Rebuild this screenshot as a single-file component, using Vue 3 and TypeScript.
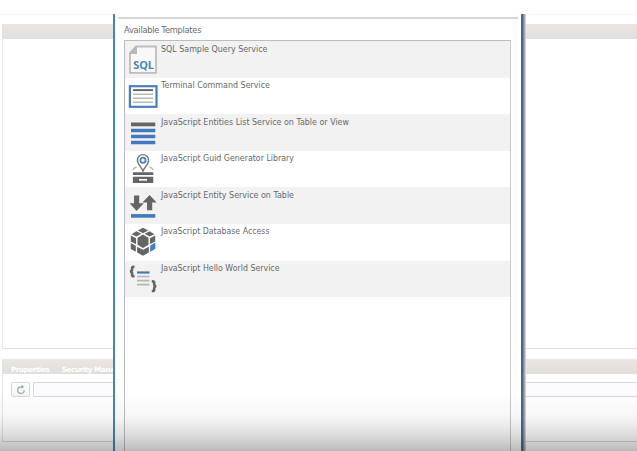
<script setup lang="ts">
interface Template {
  icon: string
  label: string
  width: number
}

const templates: Template[] = [
  { icon: 'sql', label: 'SQL Sample Query Service', width: 106.5 },
  { icon: 'terminal', label: 'Terminal Command Service', width: 109 },
  { icon: 'list', label: 'JavaScript Entities List Service on Table or View', width: 188 },
  { icon: 'guid', label: 'JavaScript Guid Generator Library', width: 133 },
  { icon: 'entity', label: 'JavaScript Entity Service on Table', width: 133 },
  { icon: 'database', label: 'JavaScript Database Access', width: 108.5 },
  { icon: 'hello', label: 'JavaScript Hello World Service', width: 118.5 },
]
</script>

<template>
  <div class="screen">
    <main class="workspace">
      <section class="editor"><div class="bar"></div></section>
      <section class="details">
        <nav class="bar tabs"><span>Properties</span><span>Security Manager</span></nav>
        <div class="toolbar">
          <button class="refresh" type="button" aria-label="Refresh">
            <svg width="12" height="12" viewBox="0 0 12 12" fill="none">
              <path d="M9.2 6.2A3.3 3.3 0 1 1 6 2.8h1.5" stroke="#a1aaaf" stroke-width="1.3" />
              <path d="M6.4.7 9.2 2.8 6.4 4.8Z" fill="#68b4d8" />
            </svg>
          </button>
          <div class="field"></div>
        </div>
      </section>
    </main>

    <div class="dialog">
      <div class="rule"></div>
      <h1>Available Templates</h1>
      <ul>
        <li v-for="item in templates" :key="item.icon">
          <svg class="icon" width="34" height="36" viewBox="0 0 34 36">
            <g v-if="item.icon === 'sql'">
              <path d="M11 5.5H31V31.8H5V12Z" fill="#f8f8f8" stroke="#bdbdbd" stroke-width="1.8" />
              <path d="M4.1 13 12 4.6V13Z" fill="#b8b8b8" />
              <text x="8.2" y="28.4" textLength="20.8" lengthAdjust="spacingAndGlyphs" class="sql">SQL</text>
            </g>
            <g v-else-if="item.icon === 'terminal'">
              <rect x="4.9" y="9.2" width="26.6" height="20.6" fill="#fff" stroke="#4a7dbd" stroke-width="2.2" />
              <path d="M8 13.1h20" stroke="#696969" stroke-width="2" />
              <path d="M8 17.2h20M8 21.2h20M8 25.2h20" stroke="#b9b9b9" stroke-width="1.6" />
            </g>
            <g v-else-if="item.icon === 'list'">
              <path d="M6 10.4h24.3" stroke="#656764" stroke-width="3.8" />
              <path d="M6 16.5h24.3M6 22.5h24.3M6 28.5h24.3" stroke="#4378bd" stroke-width="3.7" />
            </g>
            <g v-else-if="item.icon === 'guid'">
              <path d="M11.5 17.2 9.2 18 8 20M24.5 17.2l2.3.8L28 20" fill="none" stroke="#b0b0b0" stroke-width="1.4" />
              <path d="M18 21C16.8 17.3 12.4 14.2 12.4 10.2a5.6 5.6 0 0 1 11.2 0C23.6 14.2 19.2 17.3 18 21Z" fill="#fff" stroke="#707475" stroke-width="1.4" />
              <circle cx="18" cy="10.2" r="2.6" fill="#fff" stroke="#4580bd" stroke-width="1.8" />
              <path d="M7.9 22.2h20.4v2.8H7.9zM7.9 26.7h20.4v6.4H7.9z" fill="#656565" />
              <path d="M14 29.8h8" stroke="#fff" stroke-width="1.7" />
            </g>
            <g v-else-if="item.icon === 'entity'">
              <path d="M9 8.4h5.2v7.9h4.6l-7.2 7.6-7-7.6H9zM22 23.2v-7.7h-4.6l7.2-7.6 7 7.6h-4.4v7.7z" fill="#656565" />
              <path d="M6 28.9h24.3" stroke="#4378bd" stroke-width="3.6" />
            </g>
            <g v-else-if="item.icon === 'database'" transform="translate(0 .6)">
              <path fill="#656565" d="M18 4.2 23.2 7 18 9.7 12.8 7ZM18 10.9l5.5 3.2v7L18 24.3l-5.5-3.2v-7ZM11.4 7.6l5 2.6-4.9 2.8-5-2.4ZM24.6 7.6l4.9 3-5 2.4-4.9-2.8ZM5.8 12l5.3 2.7v6L5.8 18ZM30.2 12l-5.3 2.7v6l5.3-2.7ZM5.8 19.4l5 2.8v6l-5-2.9ZM12.1 23.1 18 26.2l5.8-3.1v5.7L18 32.1l-5.9-3.3Z" />
              <path d="m30.4 18.9-5.2 3v6.4l5.2-3.2Z" fill="#3f7fc7" />
            </g>
            <g v-else fill="none">
              <path d="M9.5 6.7h-.8c-1.2 0-1.6.5-1.6 1.6v1.3c0 1-.7 1.7-2 1.9 1.3.2 2 .9 2 1.9v1.3c0 1.1.4 1.6 1.6 1.6h.8M26.8 21.4h.8c1.2 0 1.6.5 1.6 1.6v1.3c0 1 .7 1.7 2 1.9-1.3.2-2 .9-2 1.9v1.3c0 1.1-.4 1.6-1.6 1.6h-.8" stroke="#656565" stroke-width="2.6" />
              <path d="M12 12.5h12.5" stroke="#4378bd" stroke-width="2.2" />
              <path d="M12 16.5h12.5M12 20.6h12.5M12 24.7h12.5" stroke="#b5b5b5" stroke-width="1.7" />
            </g>
          </svg>
          <svg class="label" :width="item.width" height="12">
            <text x="0" y="9.3" :textLength="item.width" lengthAdjust="spacingAndGlyphs">{{ item.label }}</text>
          </svg>
        </li>
      </ul>
    </div>
    <div class="shade"></div>
  </div>
</template>

<style>
body {
  background: #fff;
  overflow: hidden;
}
</style>

<style scoped>
* {
  box-sizing: border-box;
}
.screen {
  display: flow-root;
  position: relative;
  width: 637px;
  height: 451px;
  overflow: hidden;
  background: #fff;
  font-family: "DejaVu Sans", sans-serif;
}
.workspace {
  margin-top: 14px;
  padding: 9px 0 0 2px;
  border-top: 1px solid #f5f5f6;
}
.editor {
  height: 325px;
  border-left: 1px solid #e5e5e7;
  border-bottom: 1px solid #dedfe4;
}
.bar {
  height: 14.5px;
  background: linear-gradient(#e9e6e4, #e2dedb);
}
.details {
  margin-top: 10px;
  height: 83px;
  border-left: 1px solid #e4e4e6;
  border-bottom: 1px solid #d9d9dc;
}
.tabs {
  display: flex;
  gap: 12.5px;
  padding: 3.5px 0 0 8px;
  color: #fff;
  font: bold 7.3px/13px "DejaVu Sans", sans-serif;
  letter-spacing: -0.48px;
}
.toolbar {
  display: flex;
  gap: 3px;
  padding: 8.5px 0 0 8px;
}
.refresh {
  width: 19px;
  height: 15px;
  padding: 0;
  display: grid;
  place-items: center;
  border: 1px solid #d7d7da;
  border-radius: 2px;
  background: linear-gradient(#fff, #f3f3f4);
}
.field {
  flex: 1;
  height: 15px;
  border: 1px solid #d5d6d9;
  border-right: 0;
  border-radius: 2px 0 0 2px;
  background: #fcfcfe;
}
.dialog {
  position: absolute;
  left: 113px;
  top: 14px;
  width: 410px;
  height: 460px;
  padding: 3px 0 0 9px;
  border-left: 2px solid #4b83b7;
  border-right: 2px solid #426a91;
  background: #fff;
  box-shadow: 1px 0 #858b93, 2px 0 #a5a7aa, 3px 0 #d0d0d2;
}
.rule {
  width: 400px;
  height: 2px;
  margin-left: -6px;
  background: #d5d5d5;
}
h1 {
  height: 21px;
  margin: 0;
  padding-top: 5px;
  color: #6c6c6c;
  font: 8.3px/13px "DejaVu Sans", sans-serif;
  letter-spacing: -0.27px;
}
ul {
  width: 387px;
  height: 430px;
  margin: 0;
  padding: 0;
  list-style: none;
  border: 1px solid #bdbdbf;
  border-right-color: #c9c9cb;
  background: #fff;
}
li {
  display: flex;
  height: 36.6px;
}
li:nth-child(odd) {
  background: #f2f2f2;
}
.icon {
  flex: none;
  margin-top: -0.5px;
}
.label {
  flex: none;
  margin: 1.5px 0 0 2px;
  overflow: visible;
  fill: #686868;
  font-size: 8.3px;
}
.sql {
  fill: #4c82bf;
  font: bold 11px "Open Sans", sans-serif;
}
.shade {
  position: absolute;
  inset: 392px 0 0;
  background: linear-gradient(transparent, rgba(0, 0, 0, 0.035) 42%, rgba(0, 0, 0, 0.13) 72%, rgba(0, 0, 0, 0.27));
}
</style>
